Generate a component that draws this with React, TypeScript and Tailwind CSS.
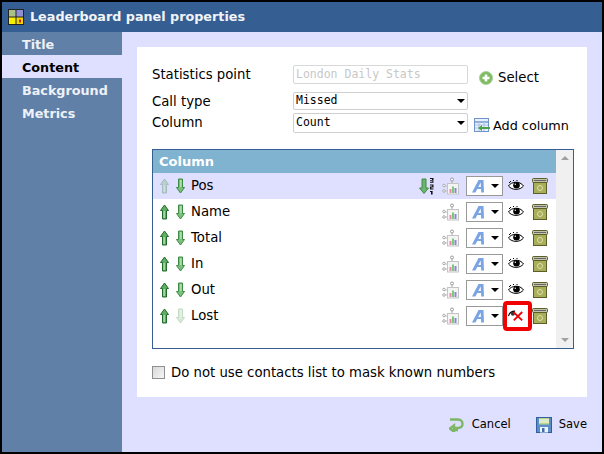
import React from "react";

const rows = ["Pos", "Name", "Total", "In", "Out", "Lost"];

const Arrow = ({ up, faded }: { up?: boolean; faded?: boolean }) => (
  <svg width="10" height="16" viewBox="0 0 10 16" className={faded ? "opacity-30" : ""}>
    <g transform={up ? undefined : "rotate(180 5 8)"}>
      <path d="M4.5 1 L8.5 6.5 H6.5 V15 H2.5 V6.5 H.5 Z" fill={up ? "#5fae63" : "#7cc07d"} stroke={up ? "#1f6b2a" : "#3d8a45"} strokeWidth="1" />
      <path d="M3.5 7 H4.7 V14 H3.5 Z" fill="#c4e8c2" />
    </g>
  </svg>
);

const SortIcon = () => (
  <svg width="16" height="18" viewBox="0 0 16 18">
    <path d="M3 2 H7 V11 H9.5 L5 16.5 L.5 11 H3 Z" fill="#6db56e" stroke="#3d8a45" />
    <path d="M11 1 h3.5 v1 h-3.5 z M13 2 h1.5 v1 h-1.5 z M11 3.2 h3.5 v1 h-3.5 z M13 4.5 h1.5 v.6 h-1.5 z M11 5.2 h3.5 v.8 h-3.5 z M11 7.5 h3.5 v1 h-3.5 z M13.2 8.5 h1.3 v1 h-1.3 z M11 9.6 h3.5 v1 h-3.5 z M11 10.6 h1.3 v1 h-1.3 z M11 11.6 h3.5 v1 h-3.5 z M12 14 h1.6 v3.5 h-1.6 z M11 14 h1 v1 h-1 z" fill="#111" />
  </svg>
);

const ChartIcon = () => (
  <svg width="18" height="18" viewBox="0 0 18 18">
    <circle cx="10" cy="2.5" r="1.5" fill="#fff" stroke="#999" />
    <path d="M10 4 V6" stroke="#aaa" />
    <rect x="5.5" y="6.5" width="11" height="10.5" fill="#f4f4f4" stroke="#c4c4c4" />
    <circle cx="2" cy="8.5" r="1.3" fill="#fff" stroke="#aaa" />
    <circle cx="2" cy="14" r="1.3" fill="#fff" stroke="#aaa" />
    <path d="M3 9 H5 M3 14 H5" stroke="#bbb" />
    <rect x="7.5" y="12" width="2" height="4" fill="#e8a" />
    <rect x="10" y="9.5" width="2" height="6.5" fill="#7c7" />
    <rect x="12.5" y="11" width="2" height="5" fill="#88c" />
  </svg>
);

const FontSelect = () => (
  <div className="flex h-[20px] w-[37px] items-center border border-[#999999] bg-white pl-[4px]">
    <svg width="15" height="14" viewBox="0 0 15 14">
      <path d="M1 13.5 L7.5 1 H12.5 L13 13.5 H10.2 L10 10 H6.3 L4.4 13.5 Z M7.3 8 H9.9 L9.7 3.5 Z" fill="#7ba4e4" fillRule="evenodd" />
    </svg>
    <span className="ml-[5px] h-0 w-0 border-x-[4px] border-t-[4px] border-x-transparent border-t-black" />
  </div>
);

const Eye = () => (
  <svg width="16" height="12" viewBox="0 0 16 12">
    <path d="M.5 6 C3 1.5 12 .5 15.5 6 C12 10.5 4 10.5 .5 6 Z" fill="#fff" stroke="#000" strokeWidth="1" />
    <circle cx="8.5" cy="5.2" r="3.3" fill="#000" />
    <circle cx="7.3" cy="4.3" r=".7" fill="#fff" />
    <path d="M1 3 L3 1 M5 1 L6 0 M9 0 V1" stroke="#000" />
  </svg>
);

const EyeOff = () => (
  <svg width="18" height="14" viewBox="0 0 18 14">
    <path d="M.5 7 C1.5 3.5 4 1.5 8 1.5" fill="none" stroke="#000" strokeWidth="1.2" />
    <circle cx="5.5" cy="4.5" r="2.2" fill="#333" />
    <path d="M6 2.5 L16 12 M16 2.5 L6.5 12" stroke="#f00000" strokeWidth="2" />
  </svg>
);

const Bin = () => (
  <svg width="16" height="16" viewBox="0 0 16 16">
    <rect x="1.5" y="4" width="13" height="11.5" fill="#a9ae58" stroke="#5a5e28" />
    <rect x=".5" y=".5" width="15" height="4" rx="1" fill="#c4c4ac" stroke="#5a5e28" />
    <rect x="2" y="2" width="12" height="1" fill="#666" />
    <circle cx="8" cy="10" r="2.5" fill="none" stroke="#dfe0b0" />
  </svg>
);

const SelectIcon = () => (
  <svg width="14" height="14" viewBox="0 0 14 14">
    <circle cx="7" cy="7" r="6.5" fill="#7dbb62" stroke="#a9d29a" />
    <path d="M5.7 3.5 H8.3 V5.7 H10.5 V8.3 H8.3 V10.5 H5.7 V8.3 H3.5 V5.7 H5.7 Z" fill="#fff" />
  </svg>
);

const AddColumnIcon = () => (
  <svg width="16" height="15" viewBox="0 0 16 15">
    <rect x=".5" y=".5" width="14" height="13" fill="#e8f0fb" stroke="#6f94cc" />
    <path d="M1 4 H14" stroke="#8fb0de" strokeWidth="2" />
    <path d="M1 7 H14 M1 10 H14 M5 4 V13 M10 4 V13" stroke="#a9c2e6" />
    <path d="M16 9 H8 V7 L4 10 L8 13 V11 H16 Z" fill="#4fa04a" />
  </svg>
);

const CancelIcon = () => (
  <svg width="15" height="15" viewBox="0 0 15 15">
    <path d="M1 2.5 H9 C12 2.5 13.5 4.5 13.5 7 C13.5 9.5 12 11 9 11 H5 V8.5 L.8 11.7 L5 14.6 V13 H9" fill="none" stroke="#7cb765" strokeWidth="2.4" />
  </svg>
);

const SaveIcon = () => (
  <svg width="16" height="16" viewBox="0 0 16 16">
    <rect x=".5" y=".5" width="15" height="15" fill="#5b8dc9" stroke="#2f5f9f" />
    <rect x="3" y="1" width="10" height="6.5" fill="#b9d58e" />
    <path d="M3 3 H13 M3 5 H13" stroke="#fff" />
    <rect x="4" y="10" width="8" height="5.5" fill="#eef3fa" />
    <rect x="6" y="11" width="2.5" height="4" fill="#3f6fa8" />
  </svg>
);

export default function App() {
  return (
    <div className="flex h-[454px] w-[604px] flex-col border-2 border-black bg-[#dfdfff] font-['DejaVu_Sans',sans-serif] text-black">
      <div className="flex h-[30px] shrink-0 items-center gap-[6px] bg-[#355f93] pl-[6px]">
        <svg width="16" height="16" viewBox="0 0 16 16">
          <rect width="16" height="16" fill="#222" />
          <rect x="1" y="1" width="6.5" height="6.5" fill="#a9c089" />
          <rect x="8.5" y="1" width="6.5" height="6.5" fill="#8f8fd6" />
          <rect x="1" y="8.5" width="6.5" height="6.5" fill="#f6f000" />
          <rect x="8.5" y="8.5" width="6.5" height="6.5" fill="#f2d800" />
          <rect x="11" y="10.5" width="2" height="3" fill="#e02020" />
        </svg>
        <span className="text-[12.75px] font-bold text-[#f2f4f8]">Leaderboard panel properties</span>
      </div>

      <div className="flex min-h-0 flex-1">
        <div className="w-[120px] shrink-0 bg-[#6080a8] text-[12.75px] font-bold leading-[23px] text-[#eef1f7]">
          <div className="h-[23px] pl-[20px] pt-[1px]">Title</div>
          <div className="h-[23px] bg-[#dfdfff] pl-[20px] pt-[1px] text-black">Content</div>
          <div className="h-[23px] pl-[20px] pt-[1px]">Background</div>
          <div className="h-[23px] pl-[20px] pt-[1px]">Metrics</div>
        </div>

        <div className="flex min-w-0 flex-1 flex-col pl-[15px] pr-[15px] pt-[15px]">
          <div className="h-[350px] shrink-0 bg-white pl-[15px] pr-[13px] pt-[18px] text-[13.25px]">
            <div className="flex h-[27px] items-start">
              <span className="w-[141px]">Statistics point</span>
              <div className="flex h-[19px] w-[175px] items-center rounded-[2px] border border-[#d8d8d8] pl-[2px] font-['DejaVu_Sans_Mono',monospace] text-[11.5px] text-[#c8c8c8]">
                London Daily Stats
              </div>
              <div className="ml-[11px] mt-[3px] flex items-center gap-[5px]">
                <SelectIcon />
                <span>Select</span>
              </div>
            </div>
            <div className="flex h-[21px] items-start">
              <span className="w-[141px]">Call type</span>
              <div className="flex h-[18px] w-[175px] items-center justify-between rounded-[2px] border border-[#cfcfcf] pl-[2px] pr-[2px] font-['DejaVu_Sans_Mono',monospace] text-[11.5px]">
                Missed
                <span className="h-0 w-0 border-x-[4px] border-t-[4px] border-x-transparent border-t-black" />
              </div>
            </div>
            <div className="flex h-[36px] items-start">
              <span className="w-[141px]">Column</span>
              <div className="flex h-[20px] w-[175px] items-center justify-between rounded-[2px] border border-[#cfcfcf] pl-[2px] pr-[2px] font-['DejaVu_Sans_Mono',monospace] text-[11.5px]">
                Count
                <span className="h-0 w-0 border-x-[4px] border-t-[4px] border-x-transparent border-t-black" />
              </div>
              <div className="ml-[6px] mt-[3px] flex items-center gap-[3px]">
                <AddColumnIcon />
                <span className="text-[12.8px]">Add column</span>
              </div>
            </div>

            <div className="flex h-[200px] border border-[#355f93]">
              <div className="min-w-0 flex-1">
                <div className="h-[23px] bg-[#7fb3d0] pl-[6px] text-[13px] font-bold leading-[24px] text-white">Column</div>
                {rows.map((name, i) => (
                  <div key={name} className={`flex h-[26px] items-center ${i === 0 ? "bg-[#dfdfff]" : ""}`}>
                    <div className="ml-[7px] flex w-[31px] gap-[5px]">
                      <Arrow up faded={i === 0} />
                      <Arrow faded={i === 5} />
                    </div>
                    <span className="flex-1">{name}</span>
                    <div className="mr-[7px] w-[16px]">{i === 0 && <SortIcon />}</div>
                    <ChartIcon />
                    <div className="ml-[6px]"><FontSelect /></div>
                    <div className="relative ml-[5px] flex w-[16px] justify-center">
                      {i === 5 ? <EyeOff /> : <Eye />}
                      {i === 5 && (
                        <div className="absolute left-[-5px] top-[-8px] h-[30px] w-[29px] rounded-[4px] border-[4px] border-[#f00000]" />
                      )}
                    </div>
                    <div className="ml-[8px] mr-[8px]"><Bin /></div>
                  </div>
                ))}
              </div>
              <div className="flex w-[17px] shrink-0 flex-col items-center justify-between bg-[#f0f0f0] py-[6px]">
                <span className="h-0 w-0 border-x-[4px] border-b-[4px] border-x-transparent border-b-[#a0a0a0]" />
                <span className="h-0 w-0 border-x-[4px] border-t-[4px] border-x-transparent border-t-[#a0a0a0]" />
              </div>
            </div>

            <div className="mt-[14px] flex items-center gap-[6px]">
              <span className="h-[13px] w-[13px] border border-[#8f8f8f] bg-gradient-to-br from-[#d8d8d8] to-[#f6f6f6]" />
              <span>Do not use contacts list to mask known numbers</span>
            </div>
          </div>

          <div className="mt-[19px] flex items-center justify-end text-[11.5px]">
            <CancelIcon />
            <span className="ml-[8px]">Cancel</span>
            <span className="ml-[25px]"><SaveIcon /></span>
            <span className="ml-[7px]">Save</span>
          </div>
        </div>
      </div>
    </div>
  );
}
